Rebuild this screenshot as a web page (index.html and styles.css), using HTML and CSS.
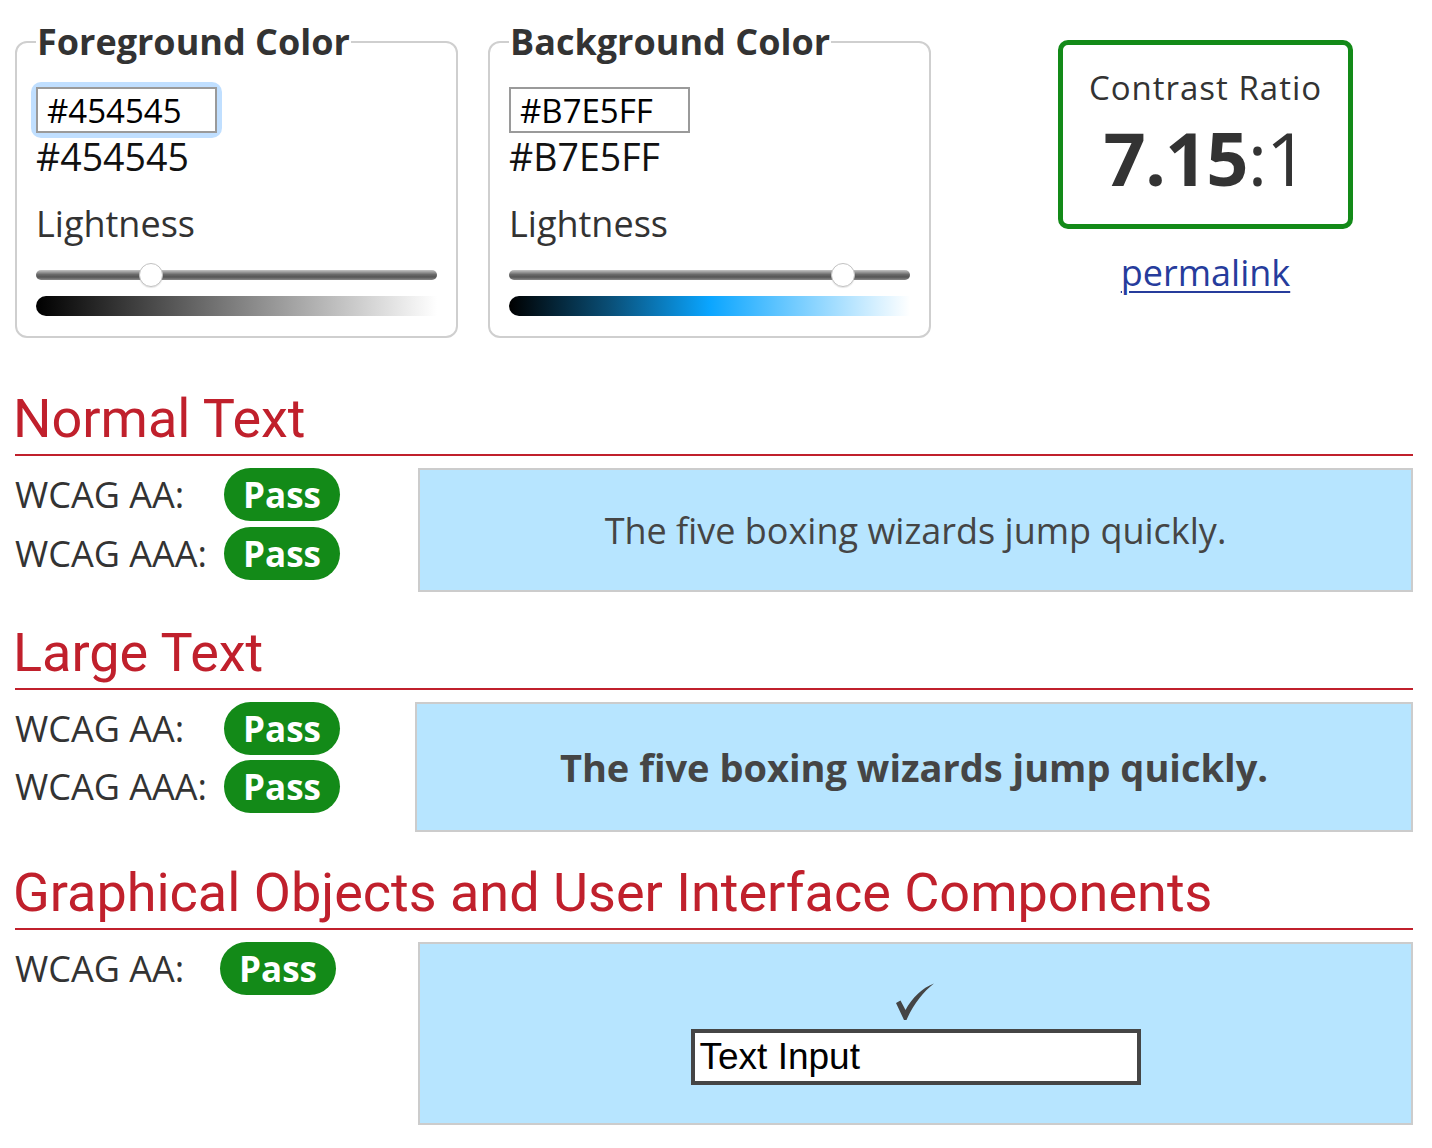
FILE: index.html
```html
<!DOCTYPE html>
<html lang="en">
<head>
<meta charset="utf-8">
<title>Contrast Checker</title>
<link rel="stylesheet" href="styles.css">
</head>
<body>
<main class="page">
  <div class="top">
    <fieldset class="picker">
      <legend>Foreground Color</legend>
      <div class="hexwrap is-focused"><input class="hex" type="text" value="#454545"></div>
      <div class="hexval">#454545</div>
      <div class="light-label">Lightness</div>
      <div class="slider"><span class="thumb" style="left:115px"></span></div>
      <div class="ramp ramp-gray"></div>
    </fieldset>
    <fieldset class="picker">
      <legend>Background Color</legend>
      <div class="hexwrap"><input class="hex" type="text" value="#B7E5FF"></div>
      <div class="hexval">#B7E5FF</div>
      <div class="light-label">Lightness</div>
      <div class="slider"><span class="thumb" style="left:334px"></span></div>
      <div class="ramp ramp-blue"></div>
    </fieldset>
    <div class="result">
      <div class="ratio-box">
        <div class="ratio-title">Contrast Ratio</div>
        <div class="ratio"><b>7.15</b>:1</div>
      </div>
      <a class="permalink" href="#">permalink</a>
    </div>
  </div>

  <section class="check check-normal">
    <h2>Normal Text</h2>
    <div class="check-body">
      <div class="results">
        <div class="row"><span class="label">WCAG AA:</span><span class="pass">Pass</span></div>
        <div class="row"><span class="label">WCAG AAA:</span><span class="pass">Pass</span></div>
      </div>
      <div class="sample sample-normal">The five boxing wizards jump quickly.</div>
    </div>
  </section>

  <section class="check check-large">
    <h2>Large Text</h2>
    <div class="check-body">
      <div class="results">
        <div class="row"><span class="label">WCAG AA:</span><span class="pass">Pass</span></div>
        <div class="row"><span class="label">WCAG AAA:</span><span class="pass">Pass</span></div>
      </div>
      <div class="sample sample-large">The five boxing wizards jump quickly.</div>
    </div>
  </section>

  <section class="check check-ui">
    <h2>Graphical Objects and User Interface Components</h2>
    <div class="check-body">
      <div class="results">
        <div class="row"><span class="label label-ui">WCAG AA:</span><span class="pass">Pass</span></div>
      </div>
      <div class="sample sample-ui">
        <svg class="checkmark" width="40" height="38" viewBox="0 0 40 38" aria-hidden="true">
          <path d="M1 20 L5.5 17.5 L10.5 27 C17 15 27 5 39 0.5 C28 9 18 22 11.5 37 L9 37 Z" fill="#454545"/>
        </svg>
        <div class="text-input">Text Input</div>
      </div>
    </div>
  </section>
</main>
</body>
</html>
```

FILE: styles.css
```css
html, body {
  margin: 0;
  padding: 0;
  background: #ffffff;
}

body {
  font-family: "Open Sans", "DejaVu Sans", sans-serif;
  color: #333333;
}

.page {
  width: 1398px;
  padding: 0 0 20px 15px;
}

/* ---------- top row ---------- */
.top {
  display: flex;
  align-items: flex-start;
  padding-top: 21px;
}

.picker {
  box-sizing: border-box;
  width: 443px;
  margin: 0 30px 0 0;
  padding: 0 19px 20px 19px;
  border: 2px solid #cfcfcf;
  border-radius: 12px;
  min-width: 0;
}

.picker legend {
  font-size: 36px;
  font-weight: 700;
  line-height: 42px;
  padding: 0 1px;
  color: #333333;
}

.hexwrap {
  width: 181px;
  margin-top: 24px;
  border-radius: 5px;
}

.hexwrap.is-focused {
  box-shadow: 0 0 0 5px #c0dfff;
}

.hex {
  box-sizing: border-box;
  display: block;
  width: 181px;
  height: 46px;
  margin: 0;
  padding: 0 0 0 9px;
  border: 2px solid #9a9a9a;
  font-family: "Open Sans", "DejaVu Sans", sans-serif;
  font-size: 33px;
  color: #000000;
  background: #ffffff;
  outline: none;
}

.hexval {
  font-size: 37.5px;
  line-height: 43px;
  margin-top: 2px;
  color: #111111;
}

.light-label {
  font-size: 36px;
  line-height: 43px;
  margin-top: 24px;
  color: #333333;
}

.slider {
  position: relative;
  height: 10px;
  margin-top: 25px;
  border-radius: 5px;
  background: linear-gradient(to bottom, #c4c4c4 0%, #6a6a6a 45%, #555555 70%, #8a8a8a 100%);
}

.thumb {
  position: absolute;
  top: 50%;
  width: 22px;
  height: 22px;
  margin: -12px 0 0 -12px;
  border: 1px solid #c2c2c2;
  border-radius: 50%;
  background: #ffffff;
  box-shadow: 0 1px 1px rgba(0, 0, 0, 0.1);
}

.ramp {
  height: 20px;
  margin-top: 16px;
  border-radius: 10px 0 0 10px;
}

.ramp-gray {
  background: linear-gradient(to right, #000000, #ffffff);
}

.ramp-blue {
  background: linear-gradient(to right,
    hsl(202, 100%, 0%) 0%,
    hsl(202, 85%, 25%) 25%,
    hsl(202, 100%, 52%) 50%,
    hsl(202, 100%, 76%) 75%,
    hsl(202, 100%, 100%) 100%);
}

.result {
  display: flex;
  flex-direction: column;
  align-items: center;
  margin-left: 97px;
  margin-top: 19px;
}

.ratio-box {
  box-sizing: border-box;
  width: 295px;
  height: 189px;
  border: 5px solid #138a18;
  border-radius: 10px;
  text-align: center;
}

.ratio-title {
  font-size: 33px;
  line-height: 44px;
  letter-spacing: 1px;
  margin-top: 21px;
  color: #333333;
}

.ratio {
  font-size: 74px;
  line-height: 76px;
  margin-top: 10px;
  letter-spacing: -1px;
  color: #333333;
}

.ratio b {
  font-weight: 700;
}

.permalink {
  margin-top: 21px;
  font-size: 36px;
  line-height: 46px;
  color: #263c9c;
  text-decoration: underline;
  text-underline-offset: 5px;
  text-decoration-thickness: 2px;
}

/* ---------- checks ---------- */
.check h2 {
  margin: 0;
  padding-bottom: 4px;
  font-family: "Roboto", "Liberation Sans", sans-serif;
  font-weight: 400;
  font-size: 54px;
  line-height: 62px;
  text-indent: -2px;
  color: #c0202c;
  border-bottom: 2px solid #c0202c;
}

.check-normal { margin-top: 50px; }
.check-large { margin-top: 30px; }
.check-ui { margin-top: 30px; }

.check-body {
  display: flex;
  align-items: flex-start;
  margin-top: 12px;
}

.results {
  display: flex;
  flex-direction: column;
  gap: 6px;
  width: 403px;
  flex: none;
}

.check-large .results {
  width: 400px;
  gap: 5px;
}

.row {
  display: flex;
  align-items: center;
}

.label {
  width: 209px;
  font-size: 36px;
  line-height: 53px;
  color: #333333;
}

.label-ui {
  width: 205px;
}

.pass {
  box-sizing: border-box;
  display: inline-block;
  width: 116px;
  height: 53px;
  border-radius: 27px;
  background: #138a18;
  color: #ffffff;
  font-weight: 700;
  font-size: 35px;
  line-height: 53px;
  text-align: center;
}

.sample {
  box-sizing: border-box;
  flex: 1;
  border: 2px solid #cccccc;
  background: #b7e5ff;
  color: #454545;
  display: flex;
  align-items: center;
  justify-content: center;
}

.sample-normal {
  height: 124px;
  font-size: 36px;
}

.sample-large {
  height: 130px;
  font-size: 38px;
  font-weight: 700;
}

.sample-ui {
  height: 183px;
  flex-direction: column;
  justify-content: flex-start;
  padding-top: 39px;
}

.checkmark {
  display: block;
  margin-left: -2px;
}

.text-input {
  box-sizing: border-box;
  width: 450px;
  height: 56px;
  margin-top: 8px;
  padding-left: 5px;
  border: 4px solid #454545;
  background: #ffffff;
  font-family: "Liberation Sans", Arial, sans-serif;
  font-size: 37px;
  line-height: 48px;
  color: #000000;
}
```
